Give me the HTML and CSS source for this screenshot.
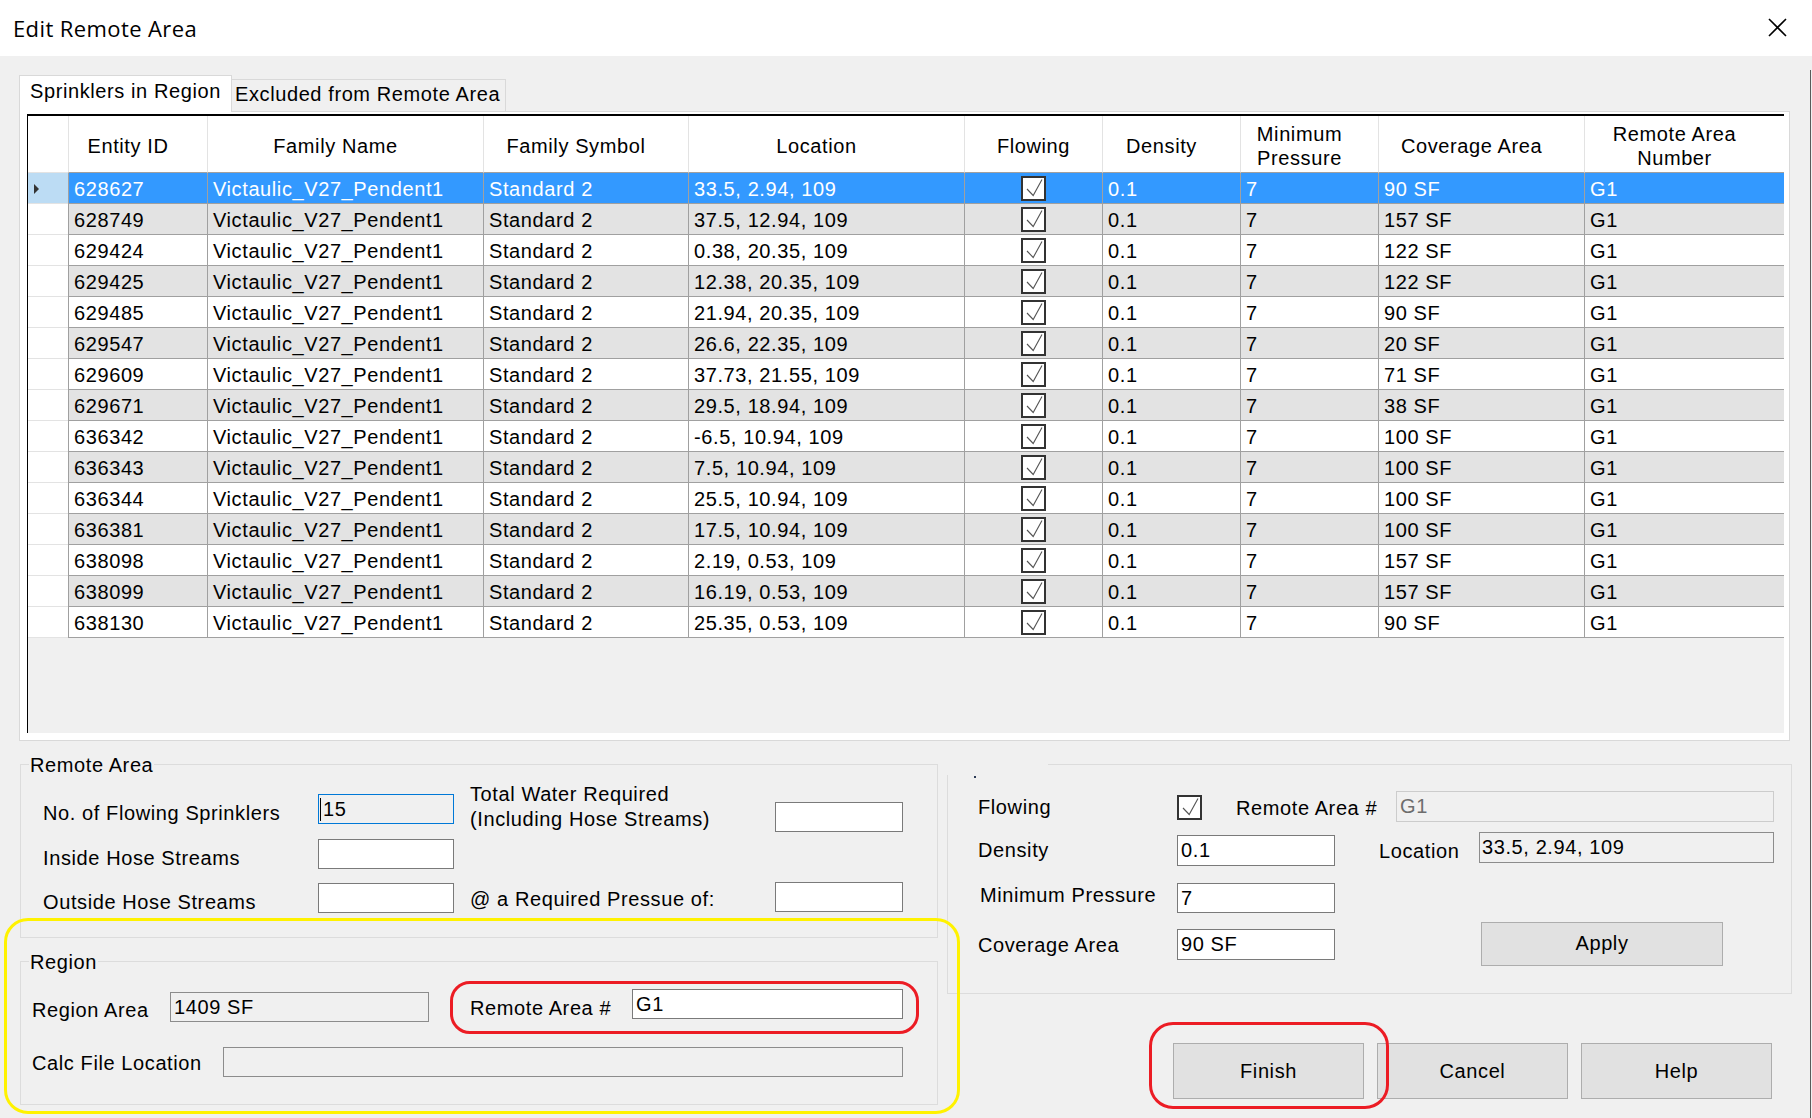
FILE: index.html
```html
<!DOCTYPE html>
<html>
<head>
<meta charset="utf-8">
<title>Edit Remote Area</title>
<link rel="stylesheet" href="styles.css">
</head>
<body>
<div class="window">
  <header class="titlebar">
    <span class="title">Edit Remote Area</span>
    <svg class="close" viewBox="0 0 19 19" width="19" height="19"><path d="M1 1 L18 18 M18 1 L1 18" stroke="#000" stroke-width="1.6" fill="none"/></svg>
  </header>
  <main class="body">
    <div class="tabs">
      <div class="tab active">Sprinklers in Region</div>
      <div class="tab">Excluded from Remote Area</div>
    </div>
    <div class="tabpage">
      <div class="dgv">
        <div class="row head">
          <div class="rh"></div>
          <div class="hc">Entity ID</div>
          <div class="hc">Family Name</div>
          <div class="hc">Family Symbol</div>
          <div class="hc">Location</div>
          <div class="hc nosort">Flowing</div>
          <div class="hc">Density</div>
          <div class="hc">Minimum<br>Pressure</div>
          <div class="hc">Coverage Area</div>
          <div class="hc">Remote Area<br>Number</div>
        </div>
        <div class="row sel"><div class="rh"><span class="tri"></span></div><div class="c">628627</div><div class="c">Victaulic_V27_Pendent1</div><div class="c">Standard 2</div><div class="c">33.5, 2.94, 109</div><div class="c cbc"><svg class="cb" viewBox="0 0 25 25"><rect x="1" y="1" width="23" height="23" fill="#fff" stroke="#333" stroke-width="2"/><path d="M6 13 L12.2 19.5 L21 3.5" fill="none" stroke="#555" stroke-width="1.1"/></svg></div><div class="c">0.1</div><div class="c">7</div><div class="c">90 SF</div><div class="c">G1</div></div>
        <div class="row alt"><div class="rh"></div><div class="c">628749</div><div class="c">Victaulic_V27_Pendent1</div><div class="c">Standard 2</div><div class="c">37.5, 12.94, 109</div><div class="c cbc"><svg class="cb" viewBox="0 0 25 25"><rect x="1" y="1" width="23" height="23" fill="#fff" stroke="#333" stroke-width="2"/><path d="M6 13 L12.2 19.5 L21 3.5" fill="none" stroke="#555" stroke-width="1.1"/></svg></div><div class="c">0.1</div><div class="c">7</div><div class="c">157 SF</div><div class="c">G1</div></div>
        <div class="row"><div class="rh"></div><div class="c">629424</div><div class="c">Victaulic_V27_Pendent1</div><div class="c">Standard 2</div><div class="c">0.38, 20.35, 109</div><div class="c cbc"><svg class="cb" viewBox="0 0 25 25"><rect x="1" y="1" width="23" height="23" fill="#fff" stroke="#333" stroke-width="2"/><path d="M6 13 L12.2 19.5 L21 3.5" fill="none" stroke="#555" stroke-width="1.1"/></svg></div><div class="c">0.1</div><div class="c">7</div><div class="c">122 SF</div><div class="c">G1</div></div>
        <div class="row alt"><div class="rh"></div><div class="c">629425</div><div class="c">Victaulic_V27_Pendent1</div><div class="c">Standard 2</div><div class="c">12.38, 20.35, 109</div><div class="c cbc"><svg class="cb" viewBox="0 0 25 25"><rect x="1" y="1" width="23" height="23" fill="#fff" stroke="#333" stroke-width="2"/><path d="M6 13 L12.2 19.5 L21 3.5" fill="none" stroke="#555" stroke-width="1.1"/></svg></div><div class="c">0.1</div><div class="c">7</div><div class="c">122 SF</div><div class="c">G1</div></div>
        <div class="row"><div class="rh"></div><div class="c">629485</div><div class="c">Victaulic_V27_Pendent1</div><div class="c">Standard 2</div><div class="c">21.94, 20.35, 109</div><div class="c cbc"><svg class="cb" viewBox="0 0 25 25"><rect x="1" y="1" width="23" height="23" fill="#fff" stroke="#333" stroke-width="2"/><path d="M6 13 L12.2 19.5 L21 3.5" fill="none" stroke="#555" stroke-width="1.1"/></svg></div><div class="c">0.1</div><div class="c">7</div><div class="c">90 SF</div><div class="c">G1</div></div>
        <div class="row alt"><div class="rh"></div><div class="c">629547</div><div class="c">Victaulic_V27_Pendent1</div><div class="c">Standard 2</div><div class="c">26.6, 22.35, 109</div><div class="c cbc"><svg class="cb" viewBox="0 0 25 25"><rect x="1" y="1" width="23" height="23" fill="#fff" stroke="#333" stroke-width="2"/><path d="M6 13 L12.2 19.5 L21 3.5" fill="none" stroke="#555" stroke-width="1.1"/></svg></div><div class="c">0.1</div><div class="c">7</div><div class="c">20 SF</div><div class="c">G1</div></div>
        <div class="row"><div class="rh"></div><div class="c">629609</div><div class="c">Victaulic_V27_Pendent1</div><div class="c">Standard 2</div><div class="c">37.73, 21.55, 109</div><div class="c cbc"><svg class="cb" viewBox="0 0 25 25"><rect x="1" y="1" width="23" height="23" fill="#fff" stroke="#333" stroke-width="2"/><path d="M6 13 L12.2 19.5 L21 3.5" fill="none" stroke="#555" stroke-width="1.1"/></svg></div><div class="c">0.1</div><div class="c">7</div><div class="c">71 SF</div><div class="c">G1</div></div>
        <div class="row alt"><div class="rh"></div><div class="c">629671</div><div class="c">Victaulic_V27_Pendent1</div><div class="c">Standard 2</div><div class="c">29.5, 18.94, 109</div><div class="c cbc"><svg class="cb" viewBox="0 0 25 25"><rect x="1" y="1" width="23" height="23" fill="#fff" stroke="#333" stroke-width="2"/><path d="M6 13 L12.2 19.5 L21 3.5" fill="none" stroke="#555" stroke-width="1.1"/></svg></div><div class="c">0.1</div><div class="c">7</div><div class="c">38 SF</div><div class="c">G1</div></div>
        <div class="row"><div class="rh"></div><div class="c">636342</div><div class="c">Victaulic_V27_Pendent1</div><div class="c">Standard 2</div><div class="c">-6.5, 10.94, 109</div><div class="c cbc"><svg class="cb" viewBox="0 0 25 25"><rect x="1" y="1" width="23" height="23" fill="#fff" stroke="#333" stroke-width="2"/><path d="M6 13 L12.2 19.5 L21 3.5" fill="none" stroke="#555" stroke-width="1.1"/></svg></div><div class="c">0.1</div><div class="c">7</div><div class="c">100 SF</div><div class="c">G1</div></div>
        <div class="row alt"><div class="rh"></div><div class="c">636343</div><div class="c">Victaulic_V27_Pendent1</div><div class="c">Standard 2</div><div class="c">7.5, 10.94, 109</div><div class="c cbc"><svg class="cb" viewBox="0 0 25 25"><rect x="1" y="1" width="23" height="23" fill="#fff" stroke="#333" stroke-width="2"/><path d="M6 13 L12.2 19.5 L21 3.5" fill="none" stroke="#555" stroke-width="1.1"/></svg></div><div class="c">0.1</div><div class="c">7</div><div class="c">100 SF</div><div class="c">G1</div></div>
        <div class="row"><div class="rh"></div><div class="c">636344</div><div class="c">Victaulic_V27_Pendent1</div><div class="c">Standard 2</div><div class="c">25.5, 10.94, 109</div><div class="c cbc"><svg class="cb" viewBox="0 0 25 25"><rect x="1" y="1" width="23" height="23" fill="#fff" stroke="#333" stroke-width="2"/><path d="M6 13 L12.2 19.5 L21 3.5" fill="none" stroke="#555" stroke-width="1.1"/></svg></div><div class="c">0.1</div><div class="c">7</div><div class="c">100 SF</div><div class="c">G1</div></div>
        <div class="row alt"><div class="rh"></div><div class="c">636381</div><div class="c">Victaulic_V27_Pendent1</div><div class="c">Standard 2</div><div class="c">17.5, 10.94, 109</div><div class="c cbc"><svg class="cb" viewBox="0 0 25 25"><rect x="1" y="1" width="23" height="23" fill="#fff" stroke="#333" stroke-width="2"/><path d="M6 13 L12.2 19.5 L21 3.5" fill="none" stroke="#555" stroke-width="1.1"/></svg></div><div class="c">0.1</div><div class="c">7</div><div class="c">100 SF</div><div class="c">G1</div></div>
        <div class="row"><div class="rh"></div><div class="c">638098</div><div class="c">Victaulic_V27_Pendent1</div><div class="c">Standard 2</div><div class="c">2.19, 0.53, 109</div><div class="c cbc"><svg class="cb" viewBox="0 0 25 25"><rect x="1" y="1" width="23" height="23" fill="#fff" stroke="#333" stroke-width="2"/><path d="M6 13 L12.2 19.5 L21 3.5" fill="none" stroke="#555" stroke-width="1.1"/></svg></div><div class="c">0.1</div><div class="c">7</div><div class="c">157 SF</div><div class="c">G1</div></div>
        <div class="row alt"><div class="rh"></div><div class="c">638099</div><div class="c">Victaulic_V27_Pendent1</div><div class="c">Standard 2</div><div class="c">16.19, 0.53, 109</div><div class="c cbc"><svg class="cb" viewBox="0 0 25 25"><rect x="1" y="1" width="23" height="23" fill="#fff" stroke="#333" stroke-width="2"/><path d="M6 13 L12.2 19.5 L21 3.5" fill="none" stroke="#555" stroke-width="1.1"/></svg></div><div class="c">0.1</div><div class="c">7</div><div class="c">157 SF</div><div class="c">G1</div></div>
        <div class="row"><div class="rh"></div><div class="c">638130</div><div class="c">Victaulic_V27_Pendent1</div><div class="c">Standard 2</div><div class="c">25.35, 0.53, 109</div><div class="c cbc"><svg class="cb" viewBox="0 0 25 25"><rect x="1" y="1" width="23" height="23" fill="#fff" stroke="#333" stroke-width="2"/><path d="M6 13 L12.2 19.5 L21 3.5" fill="none" stroke="#555" stroke-width="1.1"/></svg></div><div class="c">0.1</div><div class="c">7</div><div class="c">90 SF</div><div class="c">G1</div></div>
      </div>
    </div>

    <div class="lower">
      <div class="left-col">
        <section class="group ra">
          <span class="group-title">Remote Area</span>
          <div class="ra-grid">
            <span class="lbl c1 r1">No. of Flowing Sprinklers</span>
            <div class="tb focus c2 r1"><span class="caret"></span>15</div>
            <span class="lbl two c4 r1">Total Water Required<br>(Including Hose Streams)</span>
            <div class="tb c5 r1 low"></div>
            <span class="lbl c1 r2">Inside Hose Streams</span>
            <div class="tb c2 r2"></div>
            <span class="lbl c1 r3">Outside Hose Streams</span>
            <div class="tb c2 r3"></div>
            <span class="lbl c4 r3 at">@ a Required Pressue of:</span>
            <div class="tb c5 r3 up"></div>
          </div>
        </section>
        <section class="group region">
          <span class="group-title">Region</span>
          <div class="reg-row1">
            <span class="lbl w-ra">Region Area</span>
            <div class="tb ro w-area">1409 SF</div>
            <span class="lbl w-rn">Remote Area #</span>
            <div class="tb w-rnum">G1</div>
          </div>
          <div class="reg-row2">
            <span class="lbl w-calc">Calc File Location</span>
            <div class="tb ro w-calcbox"></div>
          </div>
        </section>
      </div>
      <div class="right-col">
        <section class="group detail">
          <span class="legend-mask"></span>
          <span class="legend-dot"></span>
          <div class="d-row d1">
            <span class="lbl d-lbl">Flowing</span>
            <svg class="cb big" viewBox="0 0 25 25"><rect x="1" y="1" width="23" height="23" fill="#fff" stroke="#333" stroke-width="2"/><path d="M6 13 L12.2 19.5 L21 3.5" fill="none" stroke="#555" stroke-width="1.1"/></svg>
            <span class="lbl d-rn">Remote Area #</span>
            <div class="tb dis d-rnbox">G1</div>
          </div>
          <div class="d-row d2">
            <span class="lbl d-lbl">Density</span>
            <div class="tb d-in">0.1</div>
            <span class="lbl d-loc">Location</span>
            <div class="tb ro d-locbox">33.5, 2.94, 109</div>
          </div>
          <div class="d-row d3">
            <span class="lbl d-lbl mp">Minimum Pressure</span>
            <div class="tb d-in">7</div>
          </div>
          <div class="d-row d4">
            <span class="lbl d-lbl">Coverage Area</span>
            <div class="tb d-in">90 SF</div>
            <button class="btn apply">Apply</button>
          </div>
        </section>
        <div class="buttons">
          <button class="btn big-btn">Finish</button>
          <button class="btn big-btn">Cancel</button>
          <button class="btn big-btn">Help</button>
        </div>
      </div>
    </div>
  </main>

  <div class="ring yellow"></div>
  <div class="ring red red-a"></div>
  <div class="ring red red-b"></div>
</div>
</body>
</html>
```

FILE: styles.css
```css
html, body {
  margin: 0;
  padding: 0;
  width: 1812px;
  height: 1118px;
  overflow: hidden;
}

.window {
  position: relative;
  width: 1812px;
  height: 1118px;
  background: #f0f0f0;
  font-family: "Liberation Sans", Arial, sans-serif;
  font-size: 20px;
  letter-spacing: 0.6px;
  color: #000;
}

/* ---------- title bar ---------- */
.titlebar {
  height: 56px;
  background: #fff;
  display: flex;
  align-items: center;
  padding-left: 13px;
  box-sizing: border-box;
}
.title {
  font-family: "Open Sans", "Noto Sans", sans-serif;
  font-size: 22px;
  letter-spacing: 0.4px;
  color: #000;
}
.close {
  margin-left: auto;
  margin-right: 25px;
  margin-top: -1px;
}

/* ---------- body ---------- */
.body {
  height: 1062px;
  padding-left: 19px;
  box-sizing: border-box;
  background: linear-gradient(to right, transparent 1810px, #5a5a5a 1810px, #5a5a5a 1811px, transparent 1811px) no-repeat 0 14px / 1812px 100%;
  background-color: #f0f0f0;
  padding-top: 19px;
}

.tabs {
  display: flex;
  align-items: flex-end;
  height: 36px;
  position: relative;
  z-index: 2;
}
.tab {
  box-sizing: border-box;
  border: 1px solid #d9d9d9;
  border-bottom: none;
  line-height: 24px;
  white-space: nowrap;
}
.tab.active {
  width: 213px;
  height: 37px;
  margin-bottom: -1px;
  background: #fff;
  padding: 3px 0 0 10px;
  position: relative;
  z-index: 2;
}
.tab:not(.active) {
  width: 275px;
  height: 32px;
  margin-left: -1px;
  background: #f0f0f0;
  padding: 2px 0 0 3px;
}

.tabpage {
  width: 1771px;
  height: 630px;
  box-sizing: border-box;
  border: 1px solid #d9d9d9;
  background: #fff;
  padding: 2px 5px 7px 7px;
}

/* ---------- data grid ---------- */
.dgv {
  height: 619px;
  box-sizing: border-box;
  border-top: 2px solid #000;
  border-left: 1px solid #000;
  background: #f0f0f0;
}
.row {
  display: grid;
  grid-template-columns: 40px 139px 276px 205px 276px 138px 138px 138px 206px 200px;
  height: 31px;
}
.row.head { height: 57px; }

.rh {
  background: #fff;
  border-bottom: 1px solid #e3e3e3;
  box-sizing: border-box;
  display: flex;
  align-items: center;
}
.row.sel .rh { background: #bcdcf4; }
.tri {
  width: 0;
  height: 0;
  margin-left: 6px;
  margin-top: 2px;
  border-top: 5px solid transparent;
  border-bottom: 5px solid transparent;
  border-left: 5px solid #333;
}

.hc {
  background: #fff;
  border-left: 1px solid #e3e3e3;
  border-bottom: 1px solid #a0a0a0;
  box-sizing: border-box;
  display: flex;
  align-items: center;
  justify-content: center;
  text-align: center;
  line-height: 24px;
  padding: 3px 20px 0 0;
}
.hc.nosort { padding-right: 0; }

.c {
  background: #fff;
  border-left: 1px solid #a0a0a0;
  border-bottom: 1px solid #a0a0a0;
  box-sizing: border-box;
  padding: 1px 0 0 5px;
  line-height: 30px;
  white-space: nowrap;
  overflow: hidden;
}
.row.alt .c { background: #e3e3e3; }
.row.sel .c { background: #3399ff; color: #fff; }
.cbc {
  display: flex;
  align-items: center;
  justify-content: center;
  padding: 0;
}
.cb {
  width: 25px;
  height: 25px;
  display: block;
}

/* ---------- lower area ---------- */
.lower {
  display: flex;
  gap: 9px;
  margin: 23px 0 0 1px;
}
.left-col {
  width: 918px;
  display: flex;
  flex-direction: column;
  gap: 23px;
}
.right-col {
  width: 845px;
}

.group {
  position: relative;
  border: 1px solid #dcdcdc;
  box-sizing: border-box;
}
.group-title {
  position: absolute;
  top: -12px;
  left: 8px;
  padding: 0 1px;
  background: #f0f0f0;
  line-height: 24px;
  white-space: nowrap;
}

.lbl {
  line-height: 24px;
  white-space: nowrap;
}

.tb {
  box-sizing: border-box;
  height: 30px;
  border: 1px solid #7a7a7a;
  background: #fff;
  padding-left: 3px;
  display: flex;
  align-items: center;
  white-space: nowrap;
  overflow: hidden;
}
.tb.focus {
  border-color: #0078d7;
  background: #f0f0f0;
  padding-left: 1px;
}
.caret {
  width: 1px;
  height: 23px;
  background: #000;
  margin-right: 2px;
}
.tb.ro {
  background: #f0f0f0;
  border-color: #8c8c8c;
}
.tb.dis {
  background: #f0f0f0;
  border-color: #cccccc;
  color: #6d6d6d;
}

/* Remote Area group */
.ra { height: 174px; }
.ra-grid {
  display: grid;
  grid-template-columns: 275px 136px 16px 305px 128px;
  grid-template-rows: 30px 30px 30px;
  row-gap: 14.5px;
  padding: 29px 0 0 22px;
  align-items: start;
}
.ra-grid .lbl { margin-top: 7px; }
.ra-grid .lbl.two { margin-top: -12px; line-height: 24.7px; }
.ra-grid .lbl.at { margin-top: 4px; }
.ra-grid .tb.low { margin-top: 8px; }
.ra-grid .tb.up { margin-top: -1px; }
.c1 { grid-column: 1; }
.c2 { grid-column: 2; }
.c4 { grid-column: 4; }
.c5 { grid-column: 5; }
.r1 { grid-row: 1; }
.r2 { grid-row: 2; }
.r3 { grid-row: 3; }

/* Region group */
.region { height: 144px; }
.reg-row1 {
  display: flex;
  align-items: flex-start;
  padding: 27px 0 0 11px;
}
.w-ra { width: 138px; margin-top: 9px; }
.w-area { width: 259px; margin-top: 3px; }
.w-rn { width: 162px; margin-left: 41px; margin-top: 7px; }
.w-rnum { width: 271px; }
.reg-row2 {
  display: flex;
  align-items: flex-start;
  padding-left: 11px;
  margin-top: 25px;
}
.w-calc { width: 191px; margin-top: 4px; }
.w-calcbox { width: 680px; }

/* detail group */
.detail {
  height: 230px;
  padding: 26px 0 0 30px;
}
.legend-mask {
  position: absolute;
  top: -1px;
  left: -1px;
  width: 101px;
  height: 11px;
  background: #f0f0f0;
}
.legend-dot {
  position: absolute;
  top: 11px;
  left: 26px;
  width: 2px;
  height: 2px;
  background: #2b3a55;
}
.d-row {
  display: flex;
  align-items: flex-start;
}
.d-lbl { width: 199px; }
.d1 .d-lbl { margin-top: 4px; }
.cb.big { margin-top: 4px; }
.d-rn { width: 160px; margin-left: 34px; margin-top: 5px; }
.d-rnbox { width: 378px; height: 31px; }
.d2 { margin-top: 10px; }
.d2 .d-lbl { margin-top: 6px; }
.d-in { width: 158px; height: 31px; }
.d2 .d-in { margin-top: 3px; }
.d-loc { width: 100px; margin-left: 44px; margin-top: 7px; }
.d-locbox { width: 295px; height: 31px; padding-left: 2px; }
.d3 { margin-top: 17px; }
.d3 .d-in { height: 30px; }
.mp { padding-left: 2px; width: 197px; }
.d4 { margin-top: 9px; }
.d4 .d-lbl { margin-top: 11px; }
.d4 .d-in { margin-top: 7px; }

.btn {
  font-family: "Liberation Sans", Arial, sans-serif;
  font-size: 20px;
  letter-spacing: 0.6px;
  color: #000;
  background: #e1e1e1;
  border: 1px solid #adadad;
  box-sizing: border-box;
  padding: 0;
  margin: 0;
}
.apply {
  width: 242px;
  height: 44px;
  margin-left: 146px;
  padding-bottom: 2px;
}
.buttons {
  display: flex;
  justify-content: flex-end;
  gap: 13px;
  margin-top: 49px;
  padding-right: 20px;
}
.big-btn {
  width: 191px;
  height: 56px;
}

/* ---------- annotation rings ---------- */
.ring {
  position: absolute;
  box-sizing: border-box;
  pointer-events: none;
}
.yellow {
  left: 4px;
  top: 918px;
  width: 956px;
  height: 196px;
  border: 3px solid #fff200;
  border-radius: 24px;
}
.red { border: 3px solid #ec1c24; }
.red-a {
  left: 450px;
  top: 981px;
  width: 469px;
  height: 53px;
  border-radius: 20px;
}
.red-b {
  left: 1149px;
  top: 1022px;
  width: 240px;
  height: 87px;
  border-radius: 24px;
}
```
